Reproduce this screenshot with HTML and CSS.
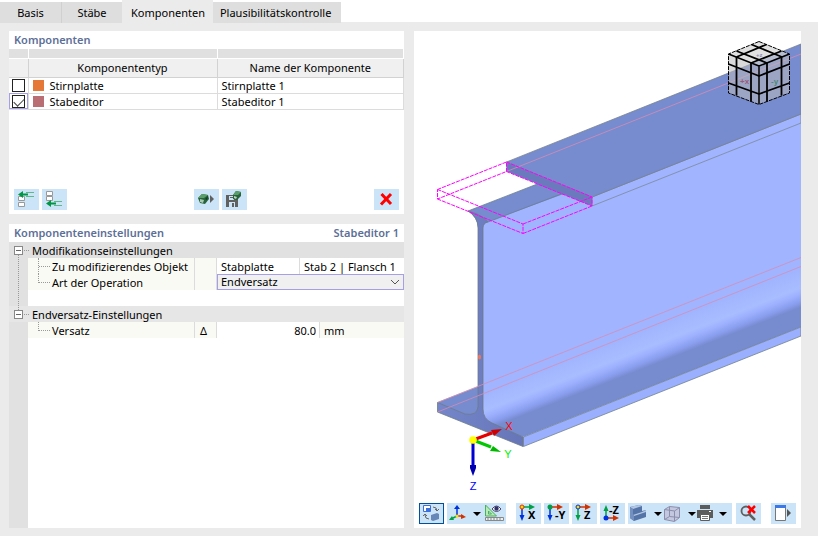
FILE: index.html
```html
<!DOCTYPE html>
<html lang="de">
<head>
<meta charset="utf-8">
<title>Komponenten</title>
<link rel="stylesheet" href="styles.css">
</head>
<body>
<nav class="tabs" role="tablist">
  <button class="tab tab-basis" role="tab">Basis</button>
  <button class="tab tab-staebe" role="tab">Stäbe</button>
  <button class="tab active" role="tab" aria-selected="true">Komponenten</button>
  <button class="tab tab-check" role="tab">Plausibilitätskontrolle</button>
</nav>
<main class="workspace">
  <div class="left">
    <section class="panel components">
      <h2 class="title">Komponenten</h2>
      <table class="list">
        <colgroup><col class="c-check"><col class="c-half"><col></colgroup>
        <thead>
          <tr class="strip"><td></td><td></td><td></td></tr>
          <tr class="heads"><th></th><th>Komponententyp</th><th>Name der Komponente</th></tr>
        </thead>
        <tbody>
          <tr><td class="check"><input type="checkbox" aria-label="Stirnplatte"></td><td><span class="swatch orange"></span>Stirnplatte</td><td>Stirnplatte 1</td></tr>
          <tr><td class="check focus"><input type="checkbox" checked aria-label="Stabeditor"></td><td><span class="swatch rose"></span>Stabeditor</td><td>Stabeditor 1</td></tr>
        </tbody>
      </table>
      <div class="actions">
        <button class="icon" aria-label="Davor einfügen"><svg width="25" height="21" viewBox="0 0 25 21"><g fill="#fff" stroke="#999"><path d="M4.500 7.500h6v4h-6zM4.500 13.500h6v4h-6z"/></g><path d="M12 3.500h8M12 7.500h8M11 5.500h3" stroke="#5fb88a"/><path d="M4 5.500L9 2v2.500h5v2H9V9z" fill="#009646"/></svg></button>
        <button class="icon" aria-label="Danach einfügen"><svg width="25" height="21" viewBox="0 0 25 21"><g fill="#fff" stroke="#999"><path d="M4.500 2.500h6v4h-6zM4.500 7.500h6v4h-6z"/></g><path d="M12 12.500h8M12 16.500h8" stroke="#5fb88a"/><path d="M4 14.500L9 11v2.500h5v2H9V18z" fill="#009646"/></svg></button>
        <span class="space"></span>
        <button class="icon" aria-label="Importieren"><svg width="25" height="21" viewBox="0 0 25 21"><path d="M4 9l4-4 6 1 1 4-4 5-5-1z" fill="#27633b"/><path d="M4 9l4-4 6 1-4 3z" fill="#5a9e6c"/><path d="M6 10l4 1-1 3-3-1z" fill="#a7cab0"/><path d="M11 10l3-3-1 4z" fill="#123c20"/><path d="M16 6l4 4-4 4z" fill="#606060"/></svg></button>
        <button class="icon" aria-label="Speichern"><svg width="25" height="21" viewBox="0 0 25 21"><path d="M4 6h9l3 4v8H4z" fill="#606060"/><path d="M7 7h5v4H7zM7 13h6v5H7z" fill="#cce4f7"/><path d="M10 14h2v4h-2zM8 8h4v1H8z" fill="#606060"/><path d="M11 6l3-4 5 1v4l-4 4-4-1z" fill="#27633b"/><path d="M11 6l3-4 5 1-3 3z" fill="#5a9e6c"/><path d="M12 7l3 1-1 2-2-1z" fill="#b9d5c0"/></svg></button>
        <span class="space"></span>
        <button class="icon" aria-label="Löschen"><svg width="25" height="21" viewBox="0 0 25 21"><path d="M7.500 5l9.500 10M17 5L7 15.500" stroke="#f00" stroke-width="3"/></svg></button>
      </div>
    </section>
    <section class="panel settings">
      <h2 class="title">Komponenteneinstellungen<span>Stabeditor 1</span></h2>
      <div class="tree">
        <div class="group"><button class="toggle" aria-label="Zuklappen"></button>Modifikationseinstellungen</div>
        <div class="row"><span class="name">Zu modifizierendes Objekt</span><span class="sym"></span><span class="value split"><span>Stabplatte</span><span>Stab 2 | Flansch 1</span></span></div>
        <div class="row last"><label class="name" for="op">Art der Operation</label><span class="sym"></span><span class="value"><select id="op"><option>Endversatz</option></select><svg class="chevron" width="10" height="6" viewBox="0 0 10 6"><path d="M1 1l4 4 4-4" fill="none" stroke="#555"/></svg></span></div>
        <div class="blank"></div>
        <div class="group second"><button class="toggle end" aria-label="Zuklappen"></button>Endversatz-Einstellungen</div>
        <div class="row last"><label class="name" for="offset">Versatz</label><span class="sym">Δ</span><span class="value measure"><input id="offset" value="80.0"><span>mm</span></span></div>
      </div>
    </section>
  </div>
  <section class="panel view">
    <svg class="scene" viewBox="414 31 387 465" preserveAspectRatio="xMinYMin slice" role="img" aria-label="Stab in 3D">
      <defs>
        <linearGradient id="fillet" gradientUnits="userSpaceOnUse" x1="801" y1="268" x2="815" y2="304">
          <stop offset="0" stop-color="#a0b4ff"/><stop offset=".48" stop-color="#a8bdff"/><stop offset=".62" stop-color="#9db1ff"/><stop offset=".8" stop-color="#8b9ff0"/><stop offset=".95" stop-color="#778bcf"/>
        </linearGradient>
        <linearGradient id="endface" x1="0" x2="1"><stop offset="0" stop-color="#7586ca"/><stop offset="1" stop-color="#6675b8"/></linearGradient>
      </defs>
      <path d="M437.500 402.500L480 386v30h-25z" fill="#778bcf" stroke="#79849f" stroke-width=".6"/>
      <path d="M482 226q0-4 6-5L592 179 801 95v232L523 437 486 424l-4-12z" fill="url(#fillet)"/>
      <path d="M523.500 437L801 327v9L523.500 446.500z" fill="#9bafff" stroke="#71828e" stroke-width=".8"/>
      <path d="M468 211L545 181l24 11L488 222q-5 1-5 5h-5q-1-10-10-16z" fill="#778bcf"/>
      <path d="M468 211L545 181M488 222l81-31" stroke="#6c7f8e" stroke-width=".8" fill="none"/>
      <path d="M468 211q11 2 20 11-5 1-5 6v181q0 10 9 14l31 14v9.500L437.500 412v-9.500L465 414q12 2 13-7V228q0-11-10-17z" fill="url(#endface)" stroke="#6c7c88" stroke-width=".8"/>
      <path d="M592 197L801 114v9L592 206z" fill="#a0b4ff" stroke="#7d8998" stroke-width=".8"/>
      <path d="M506.500 162L801 44v70L592 197z" fill="#778bcf" stroke="#77828e" stroke-width=".8"/>
      <path d="M506.500 162L592 197v9l-85.500-34.500z" fill="#6b7abc"/>
      <path d="M506.500 171.500L801 54M437.500 402.500L801 257.500M437.500 412L801 266.500" stroke="#d78db4" stroke-width=".8" fill="none"/>
      <path d="M437.500 189.500l69-27.500v9.500l-69 27.500zM437.500 189.500L523 224v9.500L437.500 199M506.500 162l85.500 35v9l-85.500-34.500M523 224l69-27M523 233.500l69-27.500" fill="none" stroke="#f0f" stroke-dasharray="4 1"/>
      <ellipse cx="479.500" cy="357" rx="1.500" ry="2.500" fill="#f07858"/>
      <g stroke-width="3"><path d="M473 440l19-7" stroke="#e60000"/><path d="M473 440l18 7" stroke="#00c800"/><path d="M473 440v26" stroke="#0000d0"/></g>
      <path d="M502 429l-8 7-3-6z" fill="#d00000"/><path d="M501 452l-11-1 3-5z" fill="#00b800"/><path d="M473 476l-3-8v-3h6v3z" fill="#0000b0"/><circle cx="473" cy="440" r="3.800" fill="#ff0"/>
      <g font-family="Liberation Sans, sans-serif" font-size="11" text-anchor="middle"><text x="509" y="430" fill="#f00">X</text><text x="508" y="458" fill="#0e0">Y</text><text x="473" y="490" fill="#00f">Z</text></g>
      <g stroke="#000" stroke-linejoin="round">
        <path d="M759 41.500l30.500 12.500v39L759 104.500 728.500 93V54z" fill="#bbb" fill-opacity=".55" stroke="none"/>
        <path d="M759 41.500l30.500 12.500L759 66 728.500 54z" fill="#eee" fill-opacity=".35" stroke="none"/>
        <path d="M759 41.500l30.500 12.500v39L759 104.500 728.500 93V54z" fill="none" stroke-dasharray="4 1"/>
        <path d="M728.500 54L759 66l30.500-12M759 66v38" fill="none" stroke-width="1.500"/>
        <path d="M728.500 64L759 76l30.500-12M728.500 83L759 94l30.500-11M736.500 57v38.500M751 63v38.500M767 63v38.500M781.500 57v38.500M751.500 44.500L782 57M736.500 51L767 63M766.500 44.500L736.500 57M781.500 51L751 63" fill="none" stroke-width="1.800"/>
      </g>
      <g font-family="Liberation Sans, sans-serif" font-weight="700" font-size="8"><text x="740" y="84" fill="#9c597b">+x</text><text x="771" y="84" fill="#4b8878">-y</text><text x="756" y="57" font-size="6" fill="#8989b4">+z</text></g>
    </svg>
    <div class="toolbar">
      <button class="icon pressed" aria-label="Ansicht wechseln"><svg width="25" height="21" viewBox="0 0 25 21"><path d="M4.500 2.500h7v6h-7z" fill="#fff" stroke="#3c6edc"/><path d="M7 5h4v3H7z" fill="#3c6edc"/><path d="M12 12l6-2 2 1v5l-6 2-2-1z" fill="#6687b7"/><path d="M14 4q4 0 4 4M16 6l2 2 2-2M10 16q-4 0-4-4M4 13l2-2 2 2" fill="none" stroke="#666"/></svg></button>
      <div class="strip-group">
        <button class="icon" aria-label="Achsen"><svg width="25" height="21" viewBox="0 0 25 21"><path d="M10 13V5" stroke="#0032dc" stroke-width="1.500"/><path d="M7 6l3-4 3 4z" fill="#0032dc"/><path d="M10 13l-6 3" stroke="#00a046" stroke-width="1.500"/><path d="M2 17l3-4 2 4z" fill="#00a046"/><path d="M10 13h6" stroke="#d23200" stroke-width="1.500"/><path d="M14 11l5 3-5 2z" fill="#d23200"/><circle cx="10" cy="13" r="1.500" fill="#ffdc00"/></svg></button>
        <button class="drop" aria-label="Achsen Optionen"></button>
        <button class="icon" aria-label="Maße anzeigen"><svg width="25" height="21" viewBox="0 0 25 21"><path d="M4.500 2v11h11z" fill="#b5edb5" stroke="#4eac63"/><path d="M7.500 8v3h3z" fill="#cce4f7" stroke="#4eac63"/><path d="M4.500 14.500h18v3h-18z" fill="#eee" stroke="#888"/><path d="M7 15v2m3-2v2m3-2v2m3-2v2m3-2v2" stroke="#888"/><path d="M11 6q4.500-6 9 0-4.500 5-9 0z" fill="#fff" stroke="#45456f"/><circle cx="15.500" cy="5.500" r="2.200" fill="#33336b"/></svg></button>
      </div>
      <div class="axes">
        <button class="icon" aria-label="Ansicht X"><svg width="25" height="21" viewBox="0 0 25 21"><path d="M6 4h8" stroke="#00a046" stroke-width="1.500"/><path d="M13 1l6 3-6 3z" fill="#00a046"/><path d="M6 4v9" stroke="#0032dc" stroke-width="1.500"/><path d="M3.500 12L6 18l2.500-6z" fill="#0032dc"/><circle cx="6" cy="4" r="2" fill="#ffdc00" stroke="#e63200"/><text class="axis" x="12" y="16">X</text></svg></button>
        <button class="icon" aria-label="Ansicht -Y"><svg width="25" height="21" viewBox="0 0 25 21"><path d="M6 4h8" stroke="#d23200" stroke-width="1.500"/><path d="M13 1l6 3-6 3z" fill="#d23200"/><path d="M6 4v9" stroke="#0032dc" stroke-width="1.500"/><path d="M3.500 12L6 18l2.500-6z" fill="#0032dc"/><circle cx="6" cy="4" r="2.500" fill="#00a046"/><text class="axis" x="11" y="16">-Y</text></svg></button>
        <button class="icon" aria-label="Ansicht Z"><svg width="25" height="21" viewBox="0 0 25 21"><path d="M6 4h8" stroke="#d23200" stroke-width="1.500"/><path d="M13 1l6 3-6 3z" fill="#d23200"/><path d="M6 4v9" stroke="#00a046" stroke-width="1.500"/><path d="M3.500 12L6 18l2.500-6z" fill="#00a046"/><circle cx="6" cy="4" r="2" fill="#ffdc00" stroke="#0032dc"/><text class="axis" x="12" y="16">Z</text></svg></button>
        <button class="icon" aria-label="Ansicht -Z"><svg width="25" height="21" viewBox="0 0 25 21"><path d="M6 15h8" stroke="#d23200" stroke-width="1.500"/><path d="M13 12l6 3-6 3z" fill="#d23200"/><path d="M6 15V6" stroke="#00a046" stroke-width="1.500"/><path d="M3.500 8L6 2l2.500 6z" fill="#00a046"/><circle cx="6" cy="15" r="2.500" fill="#0032dc"/><text class="axis" x="9" y="11">-Z</text></svg></button>
        <div class="strip-group">
          <button class="icon" aria-label="Darstellung"><svg width="25" height="21" viewBox="0 0 25 21"><path d="M2 4l9-2 3 1v5l4-1v7L6 18l-4-3z" fill="#5473a6"/><path d="M2 4l9-2 3 1-9 3zM5 12l9-3 4-2v2L6 13z" fill="#b3c7e5"/><path d="M2 4l3 2v5l1 2v5l-4-3z" fill="#7390c0"/></svg></button>
          <button class="drop" aria-label="Darstellung Optionen"></button>
          <button class="icon" aria-label="Transparenz"><svg width="25" height="21" viewBox="0 0 25 21"><path d="M2.500 6.500l5-3 10 1v10l-5 4-10-2z" fill="#c3c7df" stroke="#8c8fac"/><path d="M2.500 6.500l10 1.500 5-3.500M12.500 8v10M7.500 3.500v10l-5 3M7.500 13.500l10 1" fill="none" stroke="#8c8fac"/></svg></button>
          <button class="drop" aria-label="Transparenz Optionen"></button>
          <button class="icon narrow" aria-label="Drucken"><svg width="18" height="21" viewBox="0 0 18 21"><path d="M4 2h10v4H4zM1 7h16v8h-3v-3H4v3H1z" fill="#5c5c5c"/><path d="M4.500 11.500h9v6h-9z" fill="#fff" stroke="#5c5c5c"/><path d="M6 13.500h6M6 15.500h6" stroke="#777"/><path d="M13 8.500h2" stroke="#fff"/></svg></button>
          <button class="drop wide" aria-label="Drucken Optionen"></button>
        </div>
      </div>
      <button class="icon" aria-label="Auswahl aufheben"><svg width="25" height="21" viewBox="0 0 25 21"><circle cx="10" cy="8" r="4.500" fill="none" stroke="#606060" stroke-width="1.800"/><path d="M13 11l6 6" stroke="#606060" stroke-width="2.500"/><path d="M12 3l7 7M19 3l-7 7" stroke="#f00" stroke-width="2.500"/></svg></button>
      <button class="icon detach" aria-label="Fenster"><svg width="25" height="21" viewBox="0 0 25 21"><path d="M4.500 2.500h10v15h-10z" fill="#fff" stroke="#777"/><path d="M4 2h11v3H4z" fill="#3c78e6"/><path d="M16 6l4 4-4 4z" fill="#555"/></svg></button>
    </div>
  </section>
</main>
</body>
</html>
```
FILE: styles.css
```css
* { box-sizing: border-box; }
body {
  margin: 0;
  min-height: 100vh;
  display: flex;
  flex-direction: column;
  background: #ebebeb;
  color: #000;
  font: 11px/16px "Noto Sans", "Open Sans", sans-serif;
}
button, input, select { font: inherit; color: inherit; border: 0; margin: 0; padding: 0; border-radius: 0; }
svg { display: block; }

.tabs { display: flex; align-items: flex-end; height: 23px; background: linear-gradient(#fff 22px, #ebebeb 22px); }
.tab { height: 21px; padding: 0 7px; background: #dedede; white-space: nowrap; }
.tab-basis { width: 62px; border-right: 1px solid #d0d0d0; }
.tab-staebe { width: 60px; }
.tab.active { height: 23px; padding: 2px 8px 0 9px; background: #ebebeb; }
.tab-check { padding-right: 10px; }

.workspace { flex: 1; display: grid; grid-template-columns: minmax(0, 395fr) minmax(0, 387fr); gap: 10px; padding: 8px 17px 8px 9px; }
.left { display: grid; grid-template-rows: auto 1fr; gap: 10px; }
.panel { background: #fff; }
.title { display: flex; justify-content: space-between; margin: 0; padding: 0 5px; height: 18px; line-height: 18px; font-size: 11px; font-weight: 600; color: #5d6f98; }

.list { width: 100%; table-layout: fixed; border-collapse: collapse; }
.c-check { width: 19px; }
.c-half { width: 189px; }
.list td, .list th { height: 16px; padding: 0 4px; border-right: 1px solid #dcdcdc; border-bottom: 1px solid #dcdcdc; line-height: 15px; }
.list .strip td { height: 9px; background: #e0e0e0; border-color: #fff; }
.list .heads th { height: 19px; background: #f0f0f0; border-color: #d2d2d2; font-weight: 400; }
.list .check { padding: 0 3px; }
.list .focus { outline: 1px solid #a5a0e6; outline-offset: -1px; }
.check input { appearance: none; display: block; width: 13px; height: 13px; border: 1px solid #222; background: #fff; }
.check input:checked::after { content: ""; display: block; width: 9px; height: 5px; margin: 2px 1px; border: solid #444; border-width: 0 0 1px 1px; transform: rotate(-45deg); }
.swatch { display: inline-block; width: 11px; height: 11px; margin-right: 6px; vertical-align: -1px; }
.orange { background: #e67837; }
.rose { background: #b96e73; }

.components { padding-bottom: 4px; }
.actions { display: flex; gap: 3px; margin-top: 79px; padding: 0 5px; }
.space { flex: 1; }
.icon { flex: none; width: 25px; height: 21px; background: #cce4f7; }

.tree { background: linear-gradient(90deg, #e1e1e1 19px, #fff 19px); height: calc(100% - 18px); line-height: 18px; }
.group { display: flex; align-items: center; gap: 9px; height: 16px; padding-left: 5px; background: #e1e1e1; line-height: 16px; padding-top: 2px; }
.second { background: #e6e6e6; }
.toggle { position: relative; width: 9px; height: 9px; background: linear-gradient(#666, #666) center / 5px 1px no-repeat #fff; border: 1px solid #888; }
.toggle::before { content: ""; position: absolute; left: 9px; top: 3px; width: 5px; border-top: 1px dotted #999; }
.toggle::after { content: ""; position: absolute; left: 3px; top: 8px; height: 55px; border-left: 1px dotted #999; }
.toggle.end::after { display: none; }
.row { display: grid; grid-template-columns: 167px 22px minmax(0, 1fr); height: 16px; margin-left: 19px; background: #fafaf5; }
.row > * { height: 16px; }
.name { position: relative; padding-left: 24px; border-right: 1px solid #dcdcdc; }
.name::before { content: ""; position: absolute; left: 10px; top: 0; width: 11px; height: 16px; border-left: 1px dotted #999; background: repeating-linear-gradient(90deg, #999 0 1px, transparent 1px 2px) 0 8px / 100% 1px no-repeat; }
.last .name::before { height: 9px; }
.sym { text-align: center; border-right: 1px solid #dcdcdc; padding-right: 4px; }
.value { position: relative; display: grid; grid-template-rows: 16px; }
.split { grid-template-columns: 82px 1fr; background: #fff; }
.split span { padding-left: 4px; }
.split span + span { border-left: 1px solid #dcdcdc; }
.value select { appearance: none; width: 100%; height: 16px; padding: 0 3px; background: #f0f0f0; border: 1px solid #a5a0e6; line-height: 14px; }
.chevron { position: absolute; right: 4px; top: 5px; pointer-events: none; }
.measure { grid-template-columns: 103px 1fr; }
.measure input { width: 100%; height: 16px; padding: 2px 3px 0 0; text-align: right; background: #fff; border-right: 1px solid #dcdcdc; }
.measure span { padding-left: 4px; }
.blank { height: 16px; }

.view { display: flex; flex-direction: column; }
.scene { flex: 1 1 0; width: 100%; min-height: 0; }
.toolbar { display: flex; gap: 3px; padding: 7px 5px 4px; }
.pressed { border: 1px solid #00509b; }
.pressed svg { margin: -1px; }
.strip-group { display: flex; background: #cce4f7; }
.axes { display: flex; gap: 3px; margin: 0 1px 0 7px; }
.drop { width: 9px; height: 21px; background: #cce4f7; display: grid; place-items: center; }
.drop::before { content: ""; border: 4px solid transparent; border-top-color: #000; border-bottom: 0; }
.drop.wide { width: 18px; }
.narrow { width: 18px; }
.detach { margin-left: 7px; }
.axis { font: 700 11px "Noto Sans", sans-serif; }
```
